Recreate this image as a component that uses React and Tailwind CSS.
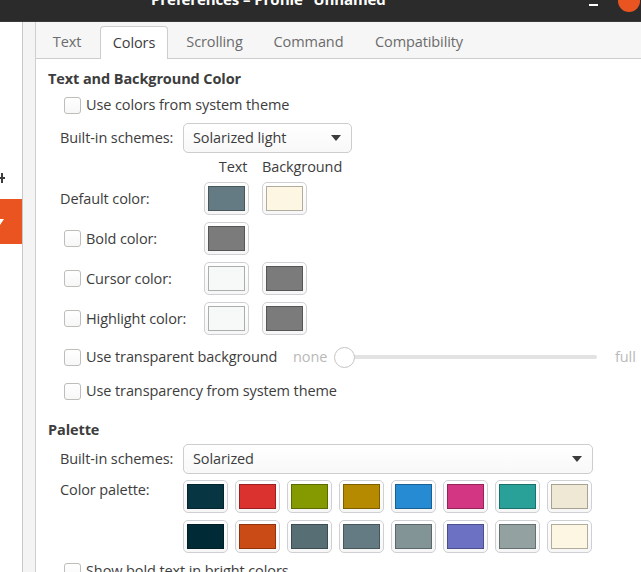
import React from "react";

const font = { fontFamily: '"Open Sans", "Noto Sans", sans-serif' };

const palette = [
    ["#073642", "#dc322f", "#859900", "#b58900", "#268bd2", "#d33682", "#2aa198", "#eee8d5"],
    ["#002b36", "#cb4b16", "#586e75", "#657b83", "#839496", "#6c71c4", "#93a1a1", "#fdf6e3"],
];

function Checkbox() {
    return <span className="w-[17px] h-[17px] shrink-0 rounded-[3px] border border-[#bdbdb9] bg-gradient-to-b from-white to-[#f7f7f7]" />;
}

function ColorButton({ color }) {
    return (
        <div className="w-[45px] h-[33px] shrink-0 rounded-[5px] border border-[#cfd0d3] bg-gradient-to-b from-white to-[#f6f6f6] flex items-center justify-center">
            <span className="w-[37px] h-[25px] border border-black/30" style={{ background: color }} />
        </div>
    );
}

function Dropdown({ label, width }) {
    return (
        <div className={`${width} h-[30px] rounded-[5px] border border-[#cdcdcd] bg-gradient-to-b from-white to-[#f8f8f8] flex items-center justify-between pl-[9px] pr-[10px]`}>
            <span>{label}</span>
            <svg width="10" height="6" viewBox="0 0 10 6">
                <path d="M0 0 L10 0 L5 6 Z" fill="#3c3c3c" />
            </svg>
        </div>
    );
}

function ColorRow({ label, check, text, bg, className }) {
    return (
        <div className={`flex items-center h-[33px] shrink-0 ${className}`}>
            <div className={`w-[144px] flex items-center gap-[5px] ${check ? "pl-[4px]" : ""}`}>
                {check && <Checkbox />}
                <span>{label}</span>
            </div>
            <div className="flex gap-[13px]">
                {text && <ColorButton color={text} />}
                {bg && <ColorButton color={bg} />}
            </div>
        </div>
    );
}

export default function App() {
    return (
        <div className="w-[641px] h-[572px] overflow-hidden bg-white text-[#3d3d3d] text-[14.5px] tracking-[-0.1px]" style={font}>
            {/* title bar */}
            <div className="h-[22px] bg-[#2b2b2b] border-b border-[#3a3a3a] relative overflow-hidden">
                <div className="absolute left-[151px] top-[-12px] text-white font-bold text-[15px] whitespace-nowrap">Preferences – Profile “Unnamed”</div>
                <span className="absolute left-[589px] top-[4px] w-[9px] h-[2px] bg-white" />
                <span className="absolute left-[618px] top-[-10px] w-[22px] h-[22px] rounded-full bg-[#e95420]" />
            </div>

            <div className="flex h-[550px] overflow-hidden">
                {/* profile list edge */}
                <div className="w-[23px] shrink-0 border-r border-[#c8c8c8] bg-white flex flex-col">
                    <div className="h-[150px] shrink-0" />
                    <div className="h-[12px] shrink-0 relative">
                        <span className="absolute left-0 top-[5px] w-[5px] h-[2px] bg-[#3c3c3c]" />
                        <span className="absolute left-[1px] top-[1px] w-[2px] h-[10px] bg-[#3c3c3c]" />
                    </div>
                    <div className="h-[15px] shrink-0" />
                    <div className="h-[45px] shrink-0 bg-[#e95420] relative">
                        <svg className="absolute left-0 top-[20px]" width="4" height="6" viewBox="0 0 4 6">
                            <path d="M-3 0 L4 0 L0 6 Z" fill="white" />
                        </svg>
                    </div>
                </div>
                <div className="w-[13px] shrink-0 bg-[#f4f4f4] border-r border-[#cfcfcf]" />

                {/* notebook */}
                <div className="flex-1 flex flex-col">
                    <div className="h-[37px] shrink-0 bg-[#f6f6f6] border-b border-[#cdcdcd] flex items-end pl-[4px] gap-[6px] text-[#6b6b6b]">
                        <div className="w-[54px] h-[32px] flex items-center justify-center">Text</div>
                        <div className="w-[68px] h-[33px] -mb-px flex items-center justify-center bg-white border border-b-0 border-[#cdcdcd] rounded-t-[4px] text-[#3d3d3d]">Colors</div>
                        <div className="w-[81px] h-[32px] flex items-center justify-center">Scrolling</div>
                        <div className="w-[95px] h-[32px] flex items-center justify-center">Command</div>
                        <div className="w-[114px] h-[32px] flex items-center justify-center">Compatibility</div>
                    </div>

                    <div className="flex flex-col">
                        <div className="h-[24px] shrink-0 mt-[8px] pl-[12px] flex items-center font-bold">Text and Background Color</div>

                        <div className="h-[24px] shrink-0 mt-[2px] pl-[28px] flex items-center gap-[5px]">
                            <Checkbox />
                            <span>Use colors from system theme</span>
                        </div>

                        <div className="h-[30px] shrink-0 mt-[6px] pl-[24px] flex items-center">
                            <span className="w-[123px]">Built-in schemes:</span>
                            <Dropdown label="Solarized light" width="w-[169px]" />
                        </div>

                        <div className="h-[20px] shrink-0 mt-[4px] pl-[168px] flex items-center">
                            <span className="w-[58px] text-center">Text</span>
                            <span className="w-[80px] text-center">Background</span>
                        </div>

                        <div className="pl-[24px] flex flex-col">
                            <ColorRow className="mt-[5px]" label="Default color:" text="#657b83" bg="#fdf6e3" />
                            <ColorRow className="mt-[7px]" check label="Bold color:" text="#7b7b7b" />
                            <ColorRow className="mt-[7px]" check label="Cursor color:" text="#f7f8f8" bg="#7b7b7b" />
                            <ColorRow className="mt-[7px]" check label="Highlight color:" text="#f7f8f8" bg="#7b7b7b" />
                        </div>

                        <div className="h-[24px] shrink-0 mt-[10px] pl-[28px] flex items-center">
                            <Checkbox />
                            <span className="ml-[5px] w-[207px]">Use transparent background</span>
                            <span className="text-[#b9b9b9] w-[41px]">none</span>
                            <div className="relative w-[266px] h-[22px] flex items-center">
                                <span className="absolute left-[10px] right-[3px] h-[4px] rounded-full bg-[#e2e2e2]" />
                                <span className="relative w-[21px] h-[21px] rounded-full border border-[#c4c4c4] bg-white" />
                            </div>
                            <span className="ml-[15px] text-[#b9b9b9]">full</span>
                        </div>

                        <div className="h-[24px] shrink-0 mt-[10px] pl-[28px] flex items-center gap-[5px]">
                            <Checkbox />
                            <span>Use transparency from system theme</span>
                        </div>

                        <div className="h-[24px] shrink-0 mt-[15px] pl-[12px] flex items-center font-bold">Palette</div>

                        <div className="h-[30px] shrink-0 mt-[2px] pl-[24px] flex items-center">
                            <span className="w-[123px]">Built-in schemes:</span>
                            <Dropdown label="Solarized" width="w-[410px]" />
                        </div>

                        <div className="mt-[6px] shrink-0 pl-[24px] flex">
                            <span className="w-[123px] leading-[20px]">Color palette:</span>
                            <div className="flex flex-col gap-[7px]">
                                {palette.map((row, i) => (
                                    <div key={i} className="flex gap-[7px]">
                                        {row.map((c) => (
                                            <ColorButton key={c} color={c} />
                                        ))}
                                    </div>
                                ))}
                            </div>
                        </div>

                        <div className="h-[24px] shrink-0 mt-[6px] pl-[28px] flex items-center gap-[5px]">
                            <Checkbox />
                            <span>Show bold text in bright colors</span>
                        </div>
                    </div>
                </div>
            </div>
        </div>
    );
}
